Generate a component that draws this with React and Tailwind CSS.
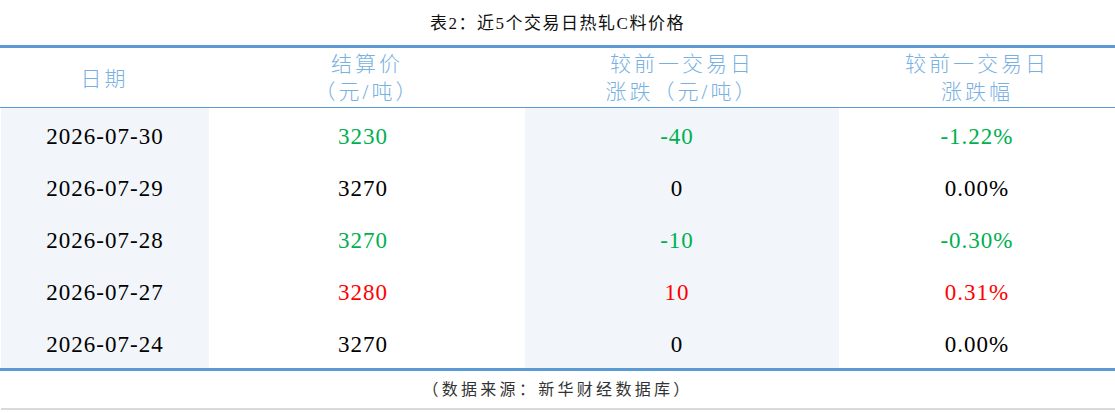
import React from "react";

const rows = [
	{ date: "2026-07-30", price: "3230", change: "-40", pct: "-1.22%", tone: "down" },
	{ date: "2026-07-29", price: "3270", change: "0", pct: "0.00%", tone: "flat" },
	{ date: "2026-07-28", price: "3270", change: "-10", pct: "-0.30%", tone: "down" },
	{ date: "2026-07-27", price: "3280", change: "10", pct: "0.31%", tone: "up" },
	{ date: "2026-07-24", price: "3270", change: "0", pct: "0.00%", tone: "flat" },
];

const toneClass = {
	down: "text-[#00b050]",
	up: "text-[#ff0000]",
	flat: "text-black",
};

const cjk = "font-['Liberation_Serif','Noto_Sans_CJK_SC',serif]";

export default function App() {
	return (
		<div className={`w-[1115px] h-[413px] bg-white ${cjk}`}>
			{/* title */}
			<div className="h-[45px] flex items-center justify-center pt-[2px] text-[17px] tracking-[1.5px] text-[#111]">
				表2：近5个交易日热轧C料价格
			</div>

			<div className="border-t-[3px] border-[#5b9bd5]">
				{/* header */}
				<div className="grid grid-cols-[209px_316px_314px_276px] h-[60px] border-b border-[#5b9bd5] text-[#78b0e2] text-[21px] leading-[28px] font-light">
					<div className="flex items-center justify-center tracking-[3px] pt-[2px]">日期</div>
					<div className="flex flex-col items-center justify-center tracking-[3px]">
						<span>结算价</span>
						<span>（元/吨）</span>
					</div>
					<div className="flex flex-col items-center justify-center tracking-[3px]">
						<span>较前一交易日</span>
						<span>涨跌（元/吨）</span>
					</div>
					<div className="flex flex-col items-center justify-center tracking-[3px]">
						<span>较前一交易日</span>
						<span>涨跌幅</span>
					</div>
				</div>

				{/* body */}
				{rows.map((r) => (
					<div
						key={r.date}
						className="grid grid-cols-[209px_316px_314px_276px] h-[52px] text-[23px] tracking-[1px]"
					>
						<div className="bg-[#f2f6fb] ml-[1px] flex items-center justify-center pt-[7px] text-black">
							{r.date}
						</div>
						<div className={`flex items-center justify-center pt-[7px] pr-[8px] ${r.tone === "flat" ? "text-black" : toneClass[r.tone]}`}>
							{r.price}
						</div>
						<div className={`bg-[#f2f6fb] flex items-center justify-center pt-[7px] pr-[10px] ${toneClass[r.tone]}`}>
							{r.change}
						</div>
						<div className={`flex items-center justify-center pt-[7px] ${toneClass[r.tone]}`}>
							{r.pct}
						</div>
					</div>
				))}
			</div>

			{/* source */}
			<div className="border-t-[3px] border-[#5b9bd5] h-[40px] flex items-center justify-center text-[16px] tracking-[3.3px] text-[#333]">
				（数据来源：新华财经数据库）
			</div>
			<div className="ml-[1px] h-[2px] bg-[#d9d9d9]" />
		</div>
	);
}
